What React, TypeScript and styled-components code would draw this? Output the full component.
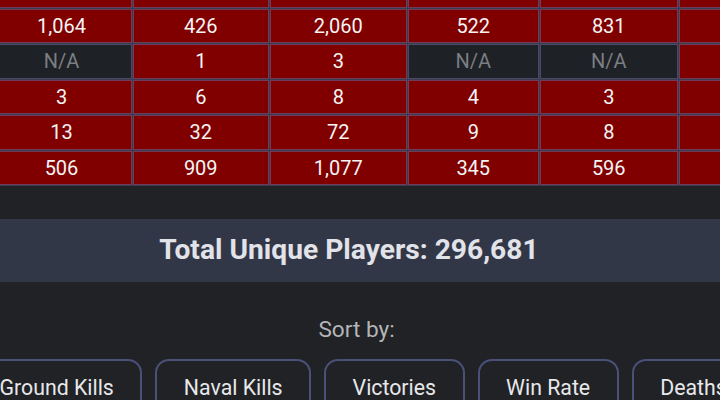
import React from "react";
import styled, { createGlobalStyle } from "styled-components";

const GlobalStyle = createGlobalStyle`
  html, body {
    margin: 0;
    padding: 0;
    background: #202226;
    overflow: hidden;
  }
  body {
    font-family: Roboto, "Noto Sans", "Liberation Sans", sans-serif;
    color: #e6e6e6;
  }
`;

const Page = styled.main`
  width: 720px;
  height: 400px;
  overflow: hidden;
  display: flex;
  flex-direction: column;
`;

const TableScroller = styled.div`
  overflow: hidden;
  flex: none;
`;

const StatsTable = styled.table`
  table-layout: fixed;
  width: 826px;
  border-collapse: separate;
  border-spacing: 1px;
  background: #3a3c50;
  margin: -28.1px 0 0 -9.5px;
`;

const Col = styled.col<{ $w: number }>`
  width: ${(p) => p.$w}px;
`;

const Cell = styled.td<{ $empty?: boolean }>`
  box-sizing: border-box;
  height: 34.6px;
  padding: 6px 4px;
  line-height: 20.6px;
  font-size: 20px;
  text-align: center;
  white-space: nowrap;
  overflow: hidden;
  border: 1px solid rgba(104, 100, 150, 0.6);
  background: ${(p) => (p.$empty ? "#1e2125" : "#800000")};
  color: ${(p) => (p.$empty ? "#7b7e82" : "#f4f4f4")};
`;

const Banner = styled.section`
  margin-top: 32.5px;
  height: 62.7px;
  flex: none;
  display: flex;
  align-items: center;
  justify-content: center;
  background: #323748;
  padding-right: 22px;
  box-sizing: border-box;
`;

const BannerTitle = styled.h2`
  margin: 0;
  font-size: 28.2px;
  line-height: 32px;
  font-weight: 700;
  color: #e2e3e8;
`;

const SortSection = styled.section`
  margin-top: 34.3px;
  display: flex;
  flex-direction: column;
  align-items: center;
  gap: 16.5px;
`;

const SortLabel = styled.div`
  font-size: 22.6px;
  color: #b4b5b8;
  padding-right: 7px;
`;

const ButtonRow = styled.div`
  align-self: flex-start;
  display: flex;
  gap: 13px;
  margin-left: -29px;
`;

const SortButton = styled.button`
  flex: none;
  font-family: inherit;
  font-size: 21.3px;
  color: #e8e8ea;
  background: #202226;
  border: 2px solid #4b5079;
  border-radius: 14px;
  padding: 14px 26.5px;
  line-height: 25px;
  cursor: pointer;
`;

type Value = string;

const rows: Value[][] = [
  ["1,210", "512", "2,341", "603", "947", "388"],
  ["1,064", "426", "2,060", "522", "831", "412"],
  ["N/A", "1", "3", "N/A", "N/A", "2"],
  ["3", "6", "8", "4", "3", "5"],
  ["13", "32", "72", "9", "8", "11"],
  ["506", "909", "1,077", "345", "596", "478"],
];

const colWidths = [140, 136.5, 136.5, 131.5, 137.5, 137];

const sortOptions = ["Ground Kills", "Naval Kills", "Victories", "Win Rate", "Deaths", "K/D Ratio"];

export default function App() {
  return (
    <>
      <GlobalStyle />
      <Page>
        <TableScroller>
          <StatsTable>
            <colgroup>
              {colWidths.map((w, i) => (
                <Col key={i} $w={w} />
              ))}
            </colgroup>
            <tbody>
              {rows.map((row, r) => (
                <tr key={r}>
                  {row.map((v, c) => (
                    <Cell key={c} $empty={v === "N/A"}>
                      {v}
                    </Cell>
                  ))}
                </tr>
              ))}
            </tbody>
          </StatsTable>
        </TableScroller>
        <Banner>
          <BannerTitle>Total Unique Players: 296,681</BannerTitle>
        </Banner>
        <SortSection>
          <SortLabel>Sort by:</SortLabel>
          <ButtonRow>
            {sortOptions.map((o) => (
              <SortButton key={o}>{o}</SortButton>
            ))}
          </ButtonRow>
        </SortSection>
      </Page>
    </>
  );
}
